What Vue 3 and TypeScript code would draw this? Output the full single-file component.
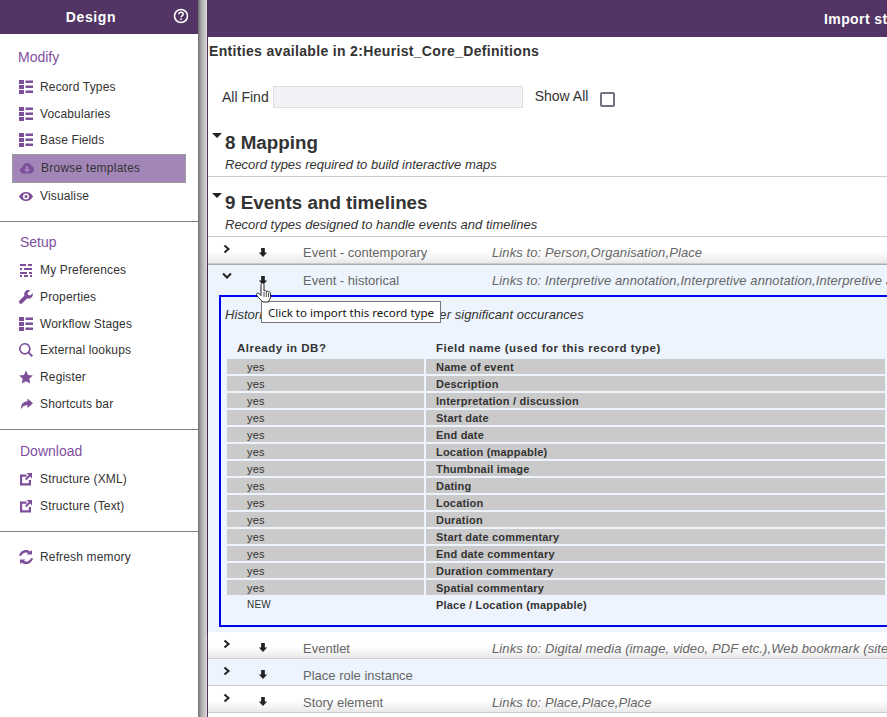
<script setup lang="ts">
// Design menu + template browser with one expanded record type
type Icon = 'list' | 'cloud' | 'eye' | 'sliders' | 'wrench' | 'search' | 'star' | 'share' | 'external' | 'refresh'

interface MenuItem {
  label: string
  icon: Icon
  active?: boolean
}

const modify: MenuItem[] = [
  { label: 'Record Types', icon: 'list' },
  { label: 'Vocabularies', icon: 'list' },
  { label: 'Base Fields', icon: 'list' },
  { label: 'Browse templates', icon: 'cloud', active: true },
  { label: 'Visualise', icon: 'eye' },
]
const setup: MenuItem[] = [
  { label: 'My Preferences', icon: 'sliders' },
  { label: 'Properties', icon: 'wrench' },
  { label: 'Workflow Stages', icon: 'list' },
  { label: 'External lookups', icon: 'search' },
  { label: 'Register', icon: 'star' },
  { label: 'Shortcuts bar', icon: 'share' },
]
const download: MenuItem[] = [
  { label: 'Structure (XML)', icon: 'external' },
  { label: 'Structure (Text)', icon: 'external' },
]
const sections = [
  { title: 'Modify', items: modify },
  { title: 'Setup', items: setup },
  { title: 'Download', items: download },
]

const iconPaths: Record<Icon, string> = {
  list: 'M0 0h5v4H0zM0 5h5v4H0zM0 10h5v4H0zM6.500 .5H14V3H6.500zM6.500 5.500H14V8H6.500zM6.500 10.500H14V13H6.500z',
  cloud: 'M3.500 12.500C1.500 12.500 0 11 0 9.200 0 7.600 1.100 6.400 2.600 6.100 2.900 3.800 4.800 2 7.200 2c2 0 3.700 1.200 4.300 3 1.500.2 2.500 1.500 2.500 3.300 0 2.300-1.700 4.200-3.900 4.200zM7 11.800l3.300-3.600H8.200V5H5.800v3.200H3.700z',
  eye: 'M7 3C3.800 3 1.200 5 0 7.500 1.200 10 3.800 12 7 12s5.800-2 7-4.500C12.800 5 10.200 3 7 3zm0 7.500a3 3 0 1 1 0-6 3 3 0 0 1 0 6zM7 6a1.500 1.500 0 1 0 0 3 1.500 1.500 0 0 0 0-3z',
  sliders: 'M1 1h6v2H1zM9 1h4v2H9zM1 5h2v2H1zM5 5h8v2H5zM1 9h7v2H1zM10 9h3v2h-3zM1 12h2v2H1zM5 12h4v2H5zM11 12h2v2h-2z',
  wrench: 'M13.700 3.200 11.200 5.600 9.100 5l-.6-2.100L11 .4C9.400-.2 7.600.1 6.400 1.300 5.200 2.500 4.900 4.200 5.400 5.700L.5 10.500c-.7.700-.7 1.900 0 2.700.8.800 2 .8 2.700 0l4.900-4.800c1.500.5 3.200.1 4.400-1 1.200-1.200 1.600-3 1.200-4.200z',
  search: 'M5.800 0a5.800 5.800 0 1 0 3.300 10.600l3.500 3.400 1.400-1.400-3.500-3.400A5.800 5.800 0 0 0 5.800 0zm0 1.600a4.200 4.200 0 1 1 0 8.400 4.200 4.200 0 0 1 0-8.400z',
  star: 'M7 .5l2 4.400 4.800.6-3.500 3.300.9 4.700L7 11.200l-4.200 2.300.9-4.700L.2 5.500 5 4.900z',
  share: 'M8.500 1.500 14 6.300l-5.500 4.800V8.200C5.500 8.200 3.300 9 2 12.500 1.600 8 3.800 4.400 8.500 4.300z',
  external: 'M1 2.500h6.500v2.200H3.200v6.600h6.600V8H12v5.500H1zM7.500 1H13v5.500l-1.900-1.900-3.700 3.700L6 6.800l3.700-3.700z',
  refresh: 'M2.300 5.800C2.900 3.700 4.800 2.400 7 2.400c.8 0 1.500.2 2.100.5L7.600 4.600H13V0l-1.700 1.600C10.200.6 8.700 0 7 0 3.600 0 .8 2.300 0 5.800zM11.700 8.200C11.100 10.300 9.200 11.600 7 11.600c-.8 0-1.500-.2-2.100-.5l1.500-1.700H1V14l1.700-1.600C3.800 13.400 5.300 14 7 14c3.400 0 6.200-2.300 7-5.800z',
}

const fields: Array<{ status: string; name: string }> = [
  { status: 'yes', name: 'Name of event' },
  { status: 'yes', name: 'Description' },
  { status: 'yes', name: 'Interpretation / discussion' },
  { status: 'yes', name: 'Start date' },
  { status: 'yes', name: 'End date' },
  { status: 'yes', name: 'Location (mappable)' },
  { status: 'yes', name: 'Thumbnail image' },
  { status: 'yes', name: 'Dating' },
  { status: 'yes', name: 'Location' },
  { status: 'yes', name: 'Duration' },
  { status: 'yes', name: 'Start date commentary' },
  { status: 'yes', name: 'End date commentary' },
  { status: 'yes', name: 'Duration commentary' },
  { status: 'yes', name: 'Spatial commentary' },
  { status: 'NEW', name: 'Place / Location (mappable)' },
]

const tail = [
  { name: 'Eventlet', links: 'Links to: Digital media (image, video, PDF etc.),Web bookmark (site, page)', tint: false },
  { name: 'Place role instance', links: '', tint: true },
  { name: 'Story element', links: 'Links to: Place,Place,Place', tint: false },
]
</script>

<template>
  <div class="screen">
    <aside class="side">
      <header class="side-head">
        <span>Design</span>
        <svg class="help" viewBox="0 0 16 16" width="16" height="16">
          <circle cx="8" cy="8" r="6.500" fill="none" stroke="#fff" stroke-width="1.600" />
          <path d="M5.800 6.300C5.900 5 6.800 4.300 8 4.300s2.200.8 2.200 1.900c0 1.700-2.200 1.600-2.200 3.100" fill="none" stroke="#fff" stroke-width="1.500" />
          <rect x="7.200" y="10.400" width="1.600" height="1.600" fill="#fff" />
        </svg>
      </header>
      <section v-for="sec in sections" :key="sec.title" class="side-sec">
        <h3>{{ sec.title }}</h3>
        <a v-for="item in sec.items" :key="item.label" class="item" :class="{ active: item.active }">
          <svg viewBox="0 0 14 14" width="14" height="14"><path :d="iconPaths[item.icon]" /></svg>
          {{ item.label }}
        </a>
      </section>
      <div class="refresh">
        <a class="item">
          <svg viewBox="0 0 14 14" width="14" height="14"><path :d="iconPaths.refresh" /></svg>
          Refresh memory
        </a>
      </div>
    </aside>

    <div class="gutter"></div>

    <main class="main">
      <header class="main-head">Import structure</header>
      <h2 class="entities">Entities available in 2:Heurist_Core_Definitions</h2>

      <div class="filter">
        <label>All Find</label>
        <input type="text" />
        <label class="show">Show All</label>
        <span class="check"></span>
      </div>

      <div class="group">
        <h1><i class="tri"></i>8 Mapping</h1>
        <p>Record types required to build interactive maps</p>
      </div>
      <div class="group events">
        <h1><i class="tri"></i>9 Events and timelines</h1>
        <p>Record types designed to handle events and timelines</p>
      </div>

      <div class="row">
        <svg class="chev" viewBox="0 0 8 10" width="8" height="10"><path d="M1.500 1.500l4 3.500-4 3.500" /></svg>
        <svg class="down" viewBox="0 0 10 12" width="10" height="11"><path d="M3 1h4v5H9.500L5 11 .5 6H3z" /></svg>
        <span class="name">Event - contemporary</span>
        <span class="links">Links to: Person,Organisation,Place</span>
      </div>

      <div class="expanded">
        <div class="row open">
          <svg class="chev" viewBox="0 0 10 8" width="10" height="8"><path d="M1 1.500l4 4 4-4" /></svg>
          <svg class="down" viewBox="0 0 10 12" width="10" height="11"><path d="M3 1h4v5H9.500L5 11 .5 6H3z" /></svg>
          <span class="name">Event - historical</span>
          <span class="links">Links to: Interpretive annotation,Interpretive annotation,Interpretive annotation</span>
        </div>
        <div class="panel">
          <p class="desc">Historical events, wars, battles or other significant occurances</p>
          <div class="fields">
            <b>Already in DB?</b>
            <b>Field name (used for this record type)</b>
            <template v-for="f in fields" :key="f.name">
              <span class="status" :class="{ fresh: f.status === 'NEW' }">{{ f.status }}</span>
              <span class="field" :class="{ fresh: f.status === 'NEW' }">{{ f.name }}</span>
            </template>
          </div>
        </div>

        <div class="tip">Click to import this record type</div>
        <svg class="hand" viewBox="0 0 16 21" width="16" height="21">
          <path d="M6.500 1c1 0 1.500.7 1.500 1.700V9c.8-.6 1.800-.4 2.200.4.900-.6 1.900-.3 2.200.6 1-.5 2.100.1 2.100 1.300v3.200c0 2.500-1.500 3.500-2 5.500H7C5.500 18.500 3 16.500 1 13.500c-.7-1.100-.4-2 .4-2.300.8-.3 1.700.2 3.600 2.300V2.700C5 1.700 5.600 1 6.500 1z" fill="#fff" stroke="#222" stroke-width="1" />
          <path d="M8 10v5M10.300 10v5M12.500 11v4" stroke="#222" stroke-width=".8" fill="none" />
        </svg>
      </div>

      <div
        v-for="r in tail"
        :key="r.name"
        class="row later"
        :class="{ tint: r.tint }"
      >
        <svg class="chev" viewBox="0 0 8 10" width="8" height="10"><path d="M1.500 1.500l4 3.500-4 3.500" /></svg>
        <svg class="down" viewBox="0 0 10 12" width="10" height="11"><path d="M3 1h4v5H9.500L5 11 .5 6H3z" /></svg>
        <span class="name">{{ r.name }}</span>
        <span class="links">{{ r.links }}</span>
      </div>
    </main>
  </div>
</template>

<style>
html,
body {
  margin: 0;
  overflow: hidden;
  background: #fff;
}
</style>

<style scoped>
.screen {
  display: flex;
  width: 887px;
  height: 717px;
  overflow: hidden;
  font-family: 'Liberation Sans', Arial, sans-serif;
  font-size: 12px;
  color: #333;
}

/* sidebar */
.side {
  flex: 0 0 198px;
  width: 198px;
  background: #fff;
}
.side-head {
  position: relative;
  height: 34px;
  background: #523564;
  color: #fff;
  font-size: 14px;
  font-weight: 700;
  letter-spacing: 0.6px;
  line-height: 34px;
  text-align: center;
  padding-right: 16px;
  box-sizing: border-box;
}
.help {
  position: absolute;
  left: 173px;
  top: 8px;
}
.side-sec {
  height: 188px;
  border-bottom: 1px solid #7f7f7f;
  box-sizing: border-box;
  padding: 15px 12px 0 0;
}
.side-sec:nth-of-type(2) {
  height: 208px;
  padding-top: 12px;
}
.side-sec:nth-of-type(3) {
  height: 102px;
  padding-top: 13px;
}
.side-sec h3 {
  margin: 0 0 6.600px 20px;
  font-size: 14px;
  font-weight: 400;
  line-height: 16px;
  color: #7f4f9f;
}
.side-sec:first-of-type h3 {
  margin: 0 0 8.500px 18px;
}
.item {
  display: flex;
  align-items: center;
  gap: 7px;
  height: 26.800px;
  padding-left: 19px;
  letter-spacing: 0.15px;
  color: #333;
  box-sizing: border-box;
}
.item svg {
  flex: none;
  fill: #7d4e9a;
}
.item.active {
  height: 29px;
  margin: 0 0 0 12px;
  padding-left: 7px;
  letter-spacing: 0.25px;
  background: #a386b8;
  border: 1px solid #9a9a9a;
}
.refresh {
  padding-top: 11.600px;
}

.gutter {
  flex: 0 0 9px;
  background: linear-gradient(to right, #6e6e6e, #a8a8a8 35%, #dcdcdc);
}

/* main area */
.main {
  flex: none;
  width: 1000px;
  background: #fff;
  border-left: 1px solid #52335f;
}
.main-head {
  height: 37px;
  background: #523564;
  color: #fff;
  font-size: 14px;
  font-weight: 700;
  letter-spacing: 0.4px;
  line-height: 38px;
  padding-left: 616px;
}
.entities {
  margin: 7px 0 0 1px;
  font-size: 14px;
  font-weight: 700;
  letter-spacing: 0.33px;
  line-height: 15px;
  color: #333;
}
.filter {
  display: flex;
  align-items: center;
  height: 24px;
  margin-top: 26px;
  padding-left: 14px;
  font-size: 14px;
}
.filter input {
  width: 250px;
  height: 22px;
  margin-left: 4px;
  padding: 0;
  box-sizing: border-box;
  background: #f2f1f5;
  border: 1px solid #ddd;
}
.show {
  margin-left: 12px;
  position: relative;
  top: -1px;
}
.check {
  width: 11px;
  height: 11px;
  margin: 5px 0 0 12px;
  border: 2px solid #76717f;
  border-radius: 2px;
  box-sizing: content-box;
}
.group {
  height: 46px;
  margin-top: 10px;
  padding: 11px 0 0 17px;
  border-bottom: 1px solid #ccc;
  box-sizing: content-box;
}
.group h1 {
  position: relative;
  margin: 0;
  font-size: 18.800px;
  line-height: 26px;
  font-weight: 700;
  color: #333;
}
.group p {
  margin: 0.500px 0 0;
  font-size: 13px;
  font-style: italic;
  color: #333;
  line-height: 15px;
}
.group.events {
  margin-top: 0;
  padding-top: 13px;
}
.tri {
  display: inline-block;
  position: absolute;
  left: -13px;
  top: 3px;
  width: 0;
  height: 0;
  border: 5.500px solid transparent;
  border-top-color: #222;
  border-bottom: 0;
}
.row {
  display: flex;
  align-items: center;
  height: 27px;
  box-sizing: border-box;
  position: relative;
  background: linear-gradient(to bottom, #fff, #fff 55%, #e9e9e9);
  border-bottom: 1px solid #ccc;
  font-size: 13px;
}
.row.tint,
.row.open {
  background: #edf4fd;
}
.row.open {
  height: 31px;
  border: 0;
  border-top: 1px solid #aaa;
}
.chev {
  position: absolute;
  left: 15px;
  top: 7px;
  fill: none;
  stroke: #222;
  stroke-width: 2;
}
.open .chev {
  left: 14px;
}
.down {
  position: absolute;
  left: 50px;
  top: 10px;
  fill: #222;
}
.name {
  position: absolute;
  left: 95px;
  top: 8px;
  color: #666;
  white-space: nowrap;
}
.links {
  position: absolute;
  left: 284px;
  top: 8px;
  font-style: italic;
  color: #666;
  letter-spacing: 0.1px;
  white-space: nowrap;
}
.later .name,
.later .links {
  top: 9px;
}
.expanded {
  position: relative;
  background: #edf4fd;
  box-shadow: 0 2px 2px rgba(0, 0, 0, 0.55);
  height: 368px;
  padding-bottom: 5px;
  box-sizing: border-box;
}
.panel {
  margin-left: 11px;
  height: 332px;
  box-sizing: border-box;
  border: 2px solid #0000f0;
  padding-left: 6px;
}
.desc {
  margin: 10px 0 0 -2px;
  font-size: 13px;
  font-style: italic;
  letter-spacing: 0.05px;
  line-height: 16px;
}
.fields {
  display: grid;
  grid-template-columns: 197px 459px;
  grid-auto-rows: 15px;
  column-gap: 2px;
  row-gap: 2px;
  margin-top: 19px;
  font-size: 11px;
  letter-spacing: 0.2px;
}
.fields b {
  font-size: 11.500px;
  letter-spacing: 0.5px;
  line-height: 13px;
  padding-left: 10px;
}
.status {
  background: #cacaca;
  padding-left: 20px;
  line-height: 16px;
}
.field {
  background: #cacaca;
  padding-left: 10px;
  font-weight: 700;
  line-height: 17px;
}
.status.fresh,
.field.fresh {
  background: transparent;
}
.status.fresh {
  font-size: 10px;
}
.tip {
  position: absolute;
  left: 53px;
  top: 37px;
  height: 22px;
  padding: 0 6px;
  background: #fff;
  border: 1px solid #767676;
  line-height: 21px;
  color: #111;
  font-family: 'Noto Sans', 'Liberation Sans', sans-serif;
  font-size: 11.500px;
  box-sizing: border-box;
  white-space: nowrap;
}
.hand {
  position: absolute;
  left: 48px;
  top: 18px;
}
</style>
